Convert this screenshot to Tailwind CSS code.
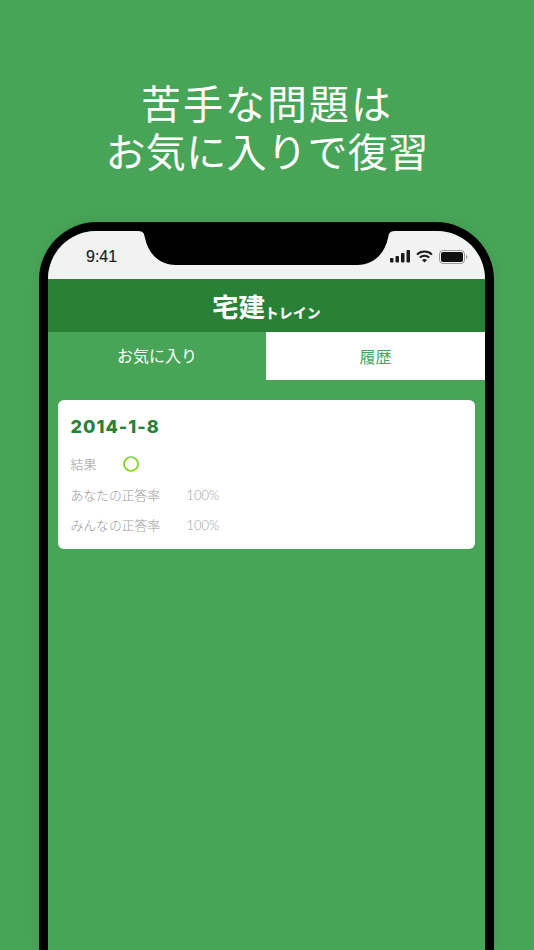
<!DOCTYPE html>
<html lang="ja">
<head>
  <meta charset="UTF-8" />
  <title>宅建トレイン</title>
  <script src="https://cdn.jsdelivr.net/npm/@tailwindcss/browser@4"></script>
</head>
<body class="w-[534px] h-[950px] overflow-hidden bg-[#48a558] font-['Noto_Sans_CJK_JP',sans-serif]">
  <!-- Heading -->
  <h1 class="h-[222px] pt-[78px] text-center text-[40px] leading-[48px] font-normal text-white">
    <div class="tracking-[2px]">苦手な問題は</div>
    <div class="tracking-[0.4px]">お気に入りで復習</div>
  </h1>

  <!-- Phone -->
  <div class="relative mx-[39px] w-[455px] h-[728px] rounded-t-[58px] bg-black pt-[9px] px-[9px] shadow-[0_0_16px_rgba(0,0,0,0.08)]">
    <div class="relative h-full rounded-t-[48px] overflow-hidden bg-[#48a558]">
      <!-- Status bar -->
      <div class="flex h-[48px] items-center justify-between bg-[#f2f2f2] pl-[38px] pr-[17px] pt-[3px]">
        <span class="font-['Liberation_Sans',sans-serif] text-[16px] font-medium text-[#222] [-webkit-text-stroke:0.2px_#222]">9:41</span>
        <div class="flex items-center gap-[6px]">
          <svg width="20" height="13" viewBox="0 0 20 13" fill="#1a1a1a">
            <rect x="0" y="8" width="3.5" height="4.5" rx="1" />
            <rect x="5.5" y="6" width="3.5" height="6.5" rx="1" />
            <rect x="11" y="3" width="3.5" height="9.5" rx="1" />
            <rect x="16.5" y="0" width="3.5" height="12.500" rx="1" />
          </svg>
          <svg width="17" height="13" viewBox="0 0 17 13" fill="none" stroke="#1a1a1a" stroke-width="2">
            <path d="M1 4.6C5.2 0.6 11.8 0.6 16 4.6" />
            <path d="M3.800 7.500C6.400 5 10.600 5 13.200 7.500" />
            <path d="M8.500 12.500L6 9.900C7.400 8.700 9.600 8.700 11 9.900Z" fill="#1a1a1a" stroke="none" />
          </svg>
          <svg width="29" height="14" viewBox="0 0 29 14">
            <rect x="0.5" y="0.5" width="25" height="13" rx="3.500" fill="none" stroke="#9a9a9a" />
            <rect x="2" y="2" width="22" height="10" rx="2" fill="#111" />
            <path d="M27 5v4c0.900-0.300 1.500-1.100 1.500-2s-0.600-1.700-1.500-2z" fill="#9a9a9a" />
          </svg>
        </div>
      </div>

      <!-- Notch -->
      <svg class="absolute left-[90px] top-0" width="257" height="34" viewBox="0 0 257 34" fill="#000">
        <path d="M0 0H257C251 0 251 3 250 7C247 22 236 34 219 34H38C21 34 10 22 7 7C6 3 6 0 0 0Z" />
      </svg>

      <!-- App header -->
      <header class="flex h-[53px] items-end justify-center bg-[#288136] pb-[8px] text-white">
        <span class="text-[26.500px] leading-[36px] font-bold">宅建</span>
        <span class="pb-[3px] text-[13.500px] leading-[18px] font-bold tracking-[0.500px] [-webkit-text-stroke:0.3px_white]">トレイン</span>
      </header>

      <!-- Tabs -->
      <div class="grid h-[48px] grid-cols-[218px_1fr] text-[16px]">
        <div class="flex items-center justify-center pb-[2px] text-white">お気に入り</div>
        <div class="flex items-center justify-center bg-white text-[#48a558]">履歴</div>
      </div>

      <!-- Result card -->
      <div class="ml-[9.500px] mr-[10px] mt-[20px] h-[149px] rounded-[6px] bg-white px-[13px] pt-[14px]">
        <div class="font-['Inter',sans-serif] text-[18px] leading-[26px] font-extrabold tracking-[1px] text-[#288136]">2014-1-8</div>
        <div class="mt-[14px] flex h-[20px] items-center text-[13px] font-light text-[#999]">
          <span class="w-[52.500px]">結果</span>
          <svg width="16" height="16" viewBox="0 0 16 16" fill="none" stroke="#7ed321" stroke-width="1.700">
            <circle cx="8" cy="8" r="7" />
          </svg>
        </div>
        <div class="mt-[12px] flex h-[18px] items-center text-[12.800px] font-light text-[#999]">
          <span class="w-[116px]">あなたの正答率</span>
          <span class="pt-[2px] font-['Lato',sans-serif] text-[13px] text-[#a0a0a0]">100%</span>
        </div>
        <div class="mt-[12px] flex h-[18px] items-center text-[12.800px] font-light text-[#999]">
          <span class="w-[116px]">みんなの正答率</span>
          <span class="pt-[2px] font-['Lato',sans-serif] text-[13px] text-[#a0a0a0]">100%</span>
        </div>
      </div>
    </div>
  </div>
</body>
</html>
